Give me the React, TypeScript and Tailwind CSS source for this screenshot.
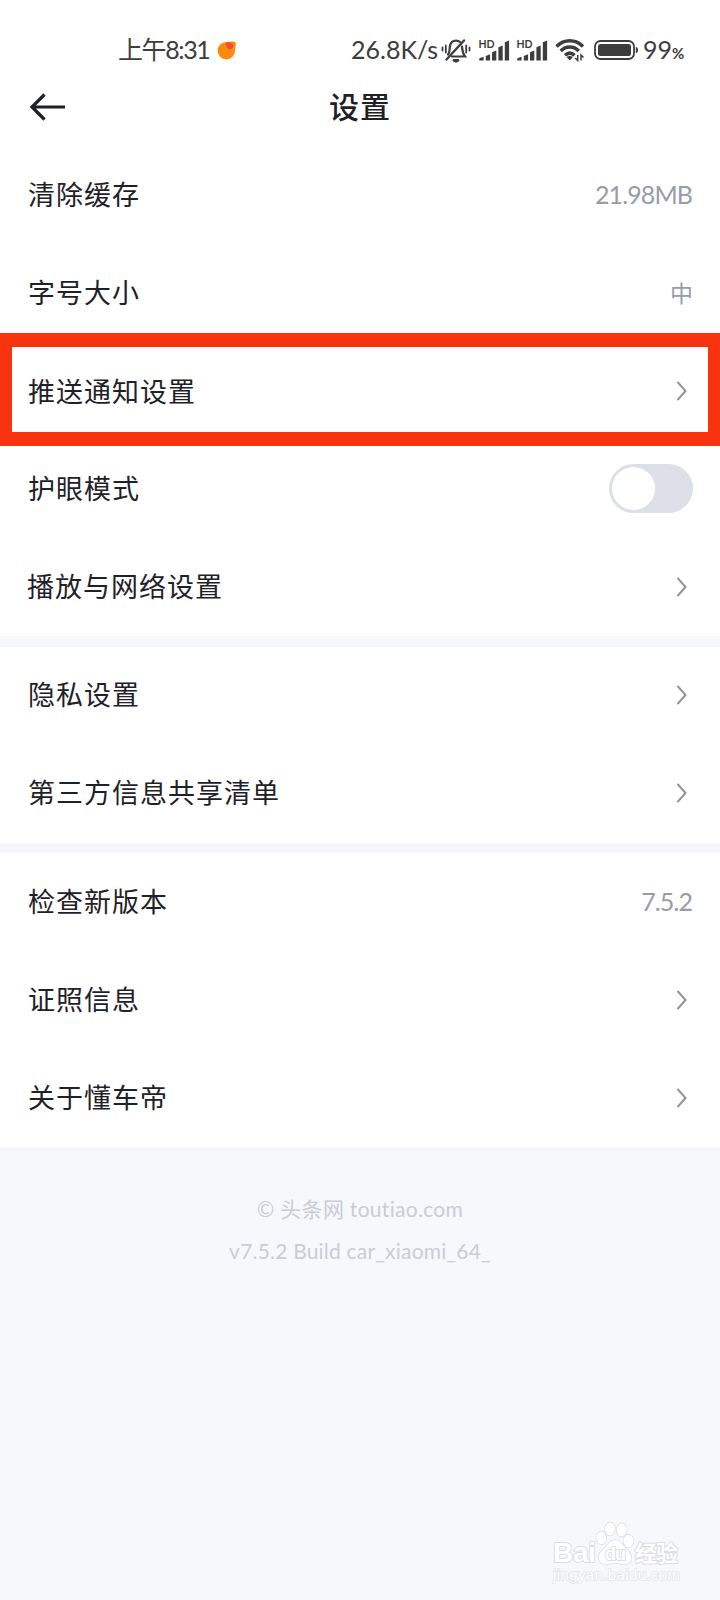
import { ReactNode } from 'react';

type Row = {
  label: string;
  value?: string;
  toggle?: boolean;
  highlight?: boolean;
  labelClass?: string;
  valueClass?: string;
};

const groups: Row[][] = [
  [
    { label: '清除缓存', value: '21.98MB' },
    { label: '字号大小', value: '中', valueClass: 'text-[23px]' },
    { label: '推送通知设置', highlight: true, labelClass: 'pt-[3px]' },
    { label: '护眼模式', toggle: true },
    { label: '播放与网络设置', labelClass: '-ml-px' },
  ],
  [{ label: '隐私设置' }, { label: '第三方信息共享清单' }],
  [{ label: '检查新版本', value: '7.5.2' }, { label: '证照信息' }, { label: '关于懂车帝' }],
];

function Signal() {
  return (
    <svg className="ml-[6px] shrink-0" width="32" height="28" viewBox="0 -3.500 32 28" fill="#3d3d3d">
      <text x="0.500" y="8.500" fontSize="10.500" fontWeight="700" fontFamily="Lato, sans-serif">
        HD
      </text>
      <path d="M1.300 21v-2.200l4.300-1.600v3.800zM7.800 21v-4.500l4.300-1.800v6.300zM14 21v-8.200l4.300-1.800v10zM20.400 21v-13.200l4.300-1.800v15zM26.800 21v-18.200l4.300-1.800v20z" />
    </svg>
  );
}

function StatusBar() {
  return (
    <div className="flex h-[75px] items-center pt-6 pl-[118px] text-[25px] text-[#3d3d3d]">
      <span className="w-[93px] whitespace-nowrap tracking-[-1.4px]">上午8:31</span>
      <svg className="ml-1.5" width="20" height="20" viewBox="0 0 20 20">
        <path d="M9 2C12 2 17 .5 18.500 2.200C19.500 4 18 7 18 10.500A8.700 8.700 0 1 1 9 2z" fill="#fd8a0c" />
        <path d="M9 2.500C12 1.500 16 3 16.500 5.500C16 8 14 10 12 9C9.500 8 8 5 9 2.500z" fill="#fb4a2c" />
      </svg>
      <span className="ml-[114px] w-[91px] whitespace-nowrap">26.8K/s</span>
      <svg className="-ml-px mr-px shrink-0" width="30" height="26" viewBox="0 0 30 26" fill="none" stroke="#3d3d3d" strokeWidth="2.200" strokeLinecap="round">
        <path d="M7 17.500C9 15.500 8.500 13 8.800 10C9.300 6 11.500 3.600 15 3.600C16.800 3.600 18 4 19 5M21 9.500C21.300 14 21.300 16 24 19.500H11" />
        <path d="M5.500 22.500L23 3.500" strokeWidth="2.400" />
        <path d="M12 23.200h6L15 24.500z" />
        <path d="M1.500 10.500v3M4.800 8.500v7M25.200 8.500v7M28.500 10.500v3" strokeWidth="1.800" />
      </svg>
      <Signal />
      <Signal />
      <svg className="ml-[7px] shrink-0" width="30" height="24" viewBox="0 0 30 24" fill="none" stroke="#3d3d3d" strokeWidth="3.400">
        <path d="M1.500 8.500C9 .8 20.500 .8 28 8.500M5.700 13C11 7.700 18.500 7.700 23.800 13M10 17.300C13 14.600 16.600 14.600 19.600 17.300" />
        <path d="M14.800 22.500l-3.300-3.400q3.300-2 6.600 0z" fill="#3d3d3d" stroke="none" />
        <path d="M22.700 17v5.500l-2.500-2.500M26 22.500v-5.500l2.500 2.500" strokeWidth="1.500" />
      </svg>
      <svg className="ml-[9px] shrink-0" width="45" height="20" viewBox="0 0 45 20" fill="#3d3d3d">
        <rect x="1" y="1" width="39" height="18" rx="5.500" fill="none" stroke="#3d3d3d" strokeWidth="1.800" />
        <rect x="4" y="4" width="33" height="12" rx="2.500" />
        <path d="M41.800 7q2.200 0 2.200 3t-2.200 3z" />
      </svg>
      <span className="ml-1 whitespace-nowrap">
        99<span className="text-[15px] font-bold">%</span>
      </span>
    </div>
  );
}

function Header() {
  return (
    <header className="grid h-[71px] grid-cols-3 items-center px-7 pb-2">
      <svg width="38" height="30" viewBox="0 0 38 30" fill="none" stroke="#1f2129" strokeWidth="3.200">
        <path d="M37 15H4M16.500 2.500L4 15L16.500 27.500" />
      </svg>
      <h1 className="text-center text-[30px] font-medium tracking-[1px]">设置</h1>
    </header>
  );
}

function Chevron() {
  return (
    <svg className="mr-[5px] mb-px" width="12" height="20" viewBox="0 0 12 20" fill="none" stroke="#92949e" strokeWidth="2" strokeLinecap="round">
      <path d="M2 1.500L9.500 10L2 18.500" />
    </svg>
  );
}

function Toggle() {
  return (
    <button className="mb-0.5 flex h-[49px] w-[84px] items-center rounded-full bg-[#dde0e8] px-[3px]" aria-label="护眼模式">
      <span className="size-[43px] rounded-full bg-white" />
    </button>
  );
}

function SettingRow({ label, value, toggle, highlight, labelClass = '', valueClass = 'text-[25px]' }: Row) {
  let right: ReactNode = <Chevron />;
  if (toggle) right = <Toggle />;
  if (value) right = <span className={`mr-px tracking-[-0.9px] text-[#999ba6] ${valueClass}`}>{value}</span>;

  return (
    <div className="relative flex h-[98px] items-center justify-between pr-[27px] pl-7">
      <span className={`text-[27px] tracking-[1px] ${labelClass}`}>{label}</span>
      {right}
      {highlight && (
        <div className="absolute inset-x-0 -top-[9px] -bottom-1.5 border-x-12 border-y-14 border-[#f73310]" />
      )}
    </div>
  );
}

function Watermark() {
  return (
    <svg width="134" height="66" viewBox="0 0 134 66" fill="#fff" stroke="#dcdde1" strokeWidth="1.500" paintOrder="stroke" strokeLinejoin="round" fontFamily="'Liberation Sans', sans-serif">
      <ellipse cx="53.300" cy="17" rx="5" ry="6.300" />
      <ellipse cx="62" cy="8" rx="5" ry="6.500" />
      <ellipse cx="73.700" cy="9" rx="5" ry="6.500" />
      <ellipse cx="80.500" cy="20" rx="5" ry="6.300" />
      <path d="M67 19C62 19 59 25 54.500 29C48 35 50 43 58 43C62 43 64 42 67 42C70 42 72 43 76 43C84 43 86 35 79.500 29C75 25 72 19 67 19z" />
      <text x="5" y="41" fontSize="28" fontWeight="700" strokeWidth="2" textLength="43">Bai</text>
      <text x="57" y="39" fontSize="18" fontWeight="700" strokeWidth="2" textLength="21">du</text>
      <text x="87" y="40" fontSize="22" fontWeight="700" strokeWidth="2" fontFamily="'Noto Sans CJK SC', sans-serif" textLength="43">经验</text>
      <text x="5" y="59" fontSize="15" strokeWidth="1.500" stroke="#e3e4e8" textLength="127">jingyan.baidu.com</text>
    </svg>
  );
}

export default function App() {
  return (
    <div className="flex h-[1600px] w-[720px] flex-col overflow-hidden bg-[#f7f8fc] font-[Lato,'Noto_Sans_CJK_SC',sans-serif] text-[#1f2129] [font-variant-ligatures:none]">
      <div className="bg-white">
        <StatusBar />
        <Header />
      </div>

      <main className="flex flex-col gap-[10.5px]">
        {groups.map((rows) => (
          <section key={rows[0].label} className="bg-white">
            {rows.map((row) => (
              <SettingRow key={row.label} {...row} />
            ))}
          </section>
        ))}
      </main>

      <footer className="flex grow flex-col items-center pt-[41px] text-[21px] leading-[42px] text-[#cbccd4]">
        <p className="tracking-[0.3px]">© 头条网 toutiao.com</p>
        <p className="tracking-[0.2px]">v7.5.2 Build car_xiaomi_64_</p>
        <div className="mt-auto mr-[38px] mb-[13px] self-end">
          <Watermark />
        </div>
      </footer>
    </div>
  );
}
